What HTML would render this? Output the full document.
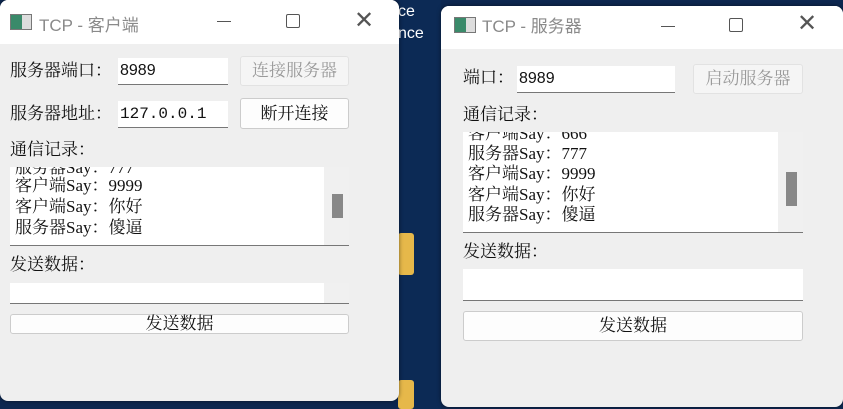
<!DOCTYPE html>
<html><head><meta charset="utf-8"><style>
*{box-sizing:border-box;margin:0;padding:0}
body{width:843px;height:409px;overflow:hidden;background:#0d2750;position:relative;font-family:"Liberation Serif","Noto Serif CJK SC",serif;font-size:17px;color:#111}
.win{position:absolute;background:#efefef;border-radius:8px;overflow:hidden;box-shadow:0 0 4px rgba(0,0,0,.5)}
.tb{position:absolute;left:0;top:0;right:0;background:#fff}
.ico{position:absolute;width:22px;height:16px;border:1px solid #777;background:linear-gradient(90deg,#3a8a6a 0 55%,#ddd 55%)}
.tt{position:absolute;font-family:"Liberation Sans","Noto Sans CJK SC",sans-serif;font-size:17px;color:#8a8a8a}
.ctl{position:absolute;color:#555;font-family:"Liberation Sans",sans-serif}
.a{position:absolute;white-space:nowrap;line-height:20px}
.in{position:absolute;background:#fff;border-bottom:1px solid #777;padding-left:2px;line-height:26px;font-family:"Liberation Sans",sans-serif;font-size:16px}
.bt{position:absolute;background:#fdfdfd;border:1px solid #ccc;border-radius:3px;text-align:center}
.dis{color:#999;background:#f5f5f5;border-color:#e2e2e2}
.ta{position:absolute;background:#fff;border-bottom:1px solid #777;overflow:hidden}
.ta .l{position:absolute;left:5px;white-space:nowrap;line-height:20px}
.sb{position:absolute;top:0;bottom:0;right:0;width:25px;background:#f0f0f0}
.hd{position:absolute;width:11px;background:#888;left:8px}
</style></head><body>
<div style="position:absolute;left:399px;top:0;width:42px;height:409px;background:#0c2a55"></div>
<div class="a" style="left:398px;top:2px;color:#fff;font-family:'Liberation Sans';font-size:16px">ce</div>
<div class="a" style="left:398px;top:24px;color:#fff;font-family:'Liberation Sans';font-size:16px">nce</div>
<div style="position:absolute;left:398px;top:233px;width:16px;height:42px;background:#e6b84a;border-radius:3px"></div>
<div style="position:absolute;left:398px;top:380px;width:16px;height:29px;background:#e6b84a;border-radius:3px"></div>

<div class="win" style="left:0;top:0;width:399px;height:401px">
 <div class="tb" style="height:44px"></div>
 <div class="ico" style="left:10px;top:14px"></div>
 <div class="tt" style="left:39px;top:11px">TCP - 客户端</div>
 <div style="position:absolute;left:217px;top:21px;width:14px;height:1px;background:#555"></div>
 <div style="position:absolute;left:286px;top:14px;width:14px;height:14px;border:1px solid #555;border-radius:2px"></div>
 <div class="ctl" style="left:354px;top:6px;font-size:24px;font-weight:100">✕</div>
 <div class="a" style="left:10px;top:61px">服务器端口：</div>
 <div class="in" style="left:118px;top:58px;width:110px;height:27px">8989</div>
 <div class="bt dis" style="left:240px;top:56px;width:109px;height:30px;line-height:28px">连接服务器</div>
 <div class="a" style="left:10px;top:104px">服务器地址：</div>
 <div class="in" style="left:118px;top:101px;width:110px;height:27px;font-family:'Liberation Mono',monospace">127.0.0.1</div>
 <div class="bt" style="left:240px;top:98px;width:109px;height:31px;line-height:29px">断开连接</div>
 <div class="a" style="left:10px;top:140px">通信记录：</div>
 <div class="ta" style="left:10px;top:167px;width:339px;height:79px">
  <div class="l" style="top:-9px">服务器Say：777</div><div class="l" style="top:9px">客户端Say：9999</div><div class="l" style="top:30px">客户端Say：你好</div><div class="l" style="top:51px">服务器Say：傻逼</div>
  <div class="sb"><span class="hd" style="top:27px;height:24px"></span></div>
 </div>
 <div class="a" style="left:10px;top:255px">发送数据：</div>
 <div class="ta" style="left:10px;top:283px;width:339px;height:21px"><div class="sb"></div></div>
 <div class="bt" style="left:10px;top:314px;width:339px;height:20px;line-height:18px">发送数据</div>
</div>

<div class="win" style="left:441px;top:6px;width:402px;height:401px">
 <div class="tb" style="height:43px"></div>
 <div class="ico" style="left:13px;top:11px"></div>
 <div class="tt" style="left:41px;top:6px">TCP - 服务器</div>
 <div style="position:absolute;left:220px;top:20px;width:14px;height:1px;background:#555"></div>
 <div style="position:absolute;left:288px;top:12px;width:14px;height:14px;border:1px solid #555;border-radius:2px"></div>
 <div class="ctl" style="left:356px;top:3px;font-size:24px">✕</div>
 <div class="a" style="left:22px;top:62px">端口：</div>
 <div class="in" style="left:76px;top:60px;width:158px;height:27px">8989</div>
 <div class="bt dis" style="left:252px;top:58px;width:110px;height:30px;line-height:28px">启动服务器</div>
 <div class="a" style="left:22px;top:99px">通信记录：</div>
 <div class="ta" style="left:22px;top:126px;width:340px;height:101px">
  <div class="l" style="top:-8px">客户端Say：666</div><div class="l" style="top:12px">服务器Say：777</div><div class="l" style="top:32px">客户端Say：9999</div><div class="l" style="top:53px">客户端Say：你好</div><div class="l" style="top:73px">服务器Say：傻逼</div>
  <div class="sb"><span class="hd" style="top:40px;height:34px"></span></div>
 </div>
 <div class="a" style="left:22px;top:236px">发送数据：</div>
 <div class="ta" style="left:22px;top:263px;width:340px;height:32px"></div>
 <div class="bt" style="left:22px;top:305px;width:340px;height:30px;line-height:28px">发送数据</div>
</div>
</body></html>
